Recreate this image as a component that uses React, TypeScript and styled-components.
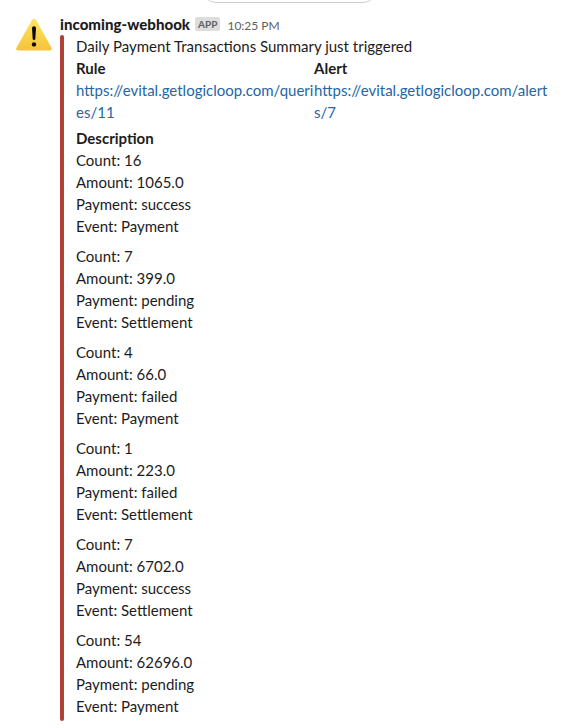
import React from "react";
import styled, { createGlobalStyle } from "styled-components";

const GlobalStyle = createGlobalStyle`
  * { box-sizing: border-box; }
  body {
    margin: 0;
    background: #fff;
    color: #1d1c1d;
    font-family: Lato, "Noto Sans", sans-serif;
    font-size: 15px;
    line-height: 22px;
    overflow: hidden;
  }
`;

const Page = styled.main`
  position: relative;
  height: 728px;
  padding: 14px 16px 0;
  overflow: hidden;
`;

const DatePill = styled.div`
  position: absolute;
  top: -25px;
  left: 202px;
  width: 175px;
  height: 28px;
  border: 1px solid #cfcfcf;
  border-radius: 24px;
`;

const Message = styled.article`
  display: grid;
  grid-template-columns: 36px 1fr;
  column-gap: 8px;
`;

const Avatar = styled.svg`
  display: block;
  width: 36px;
  height: 36px;
  margin-top: 3px;
`;

const Header = styled.header`
  display: flex;
  align-items: flex-start;
  height: 21px;
`;

const Sender = styled.span`
  font-weight: 900;
  line-height: 20px;
  letter-spacing: 0.04px;
`;

const AppBadge = styled.span`
  height: 14px;
  margin: 3px 7px 0 5px;
  padding: 0 3px;
  border-radius: 2px;
  background: #dddddd;
  color: #616061;
  font-size: 10px;
  font-weight: 700;
  line-height: 14px;
`;

const Time = styled.time`
  color: #616061;
  font-size: 12px;
  line-height: 24px;
`;

const Attachment = styled.section`
  display: flex;
  height: 686px;
`;

const Bar = styled.div`
  flex: none;
  width: 4px;
  margin-right: 12px;
  border-radius: 8px;
  background: #b04238;
`;

const Content = styled.div`
  flex: 1;
`;

const Fields = styled.div`
  display: grid;
  grid-template-columns: 238px 238px;
  margin-bottom: 4px;
`;

const Label = styled.div`
  font-weight: 700;
`;

const Link = styled.a`
  display: block;
  color: #2566a3;
  white-space: nowrap;
`;

const Group = styled.div`
  margin-bottom: 8px;
`;

const records = [
  ["16", "1065.0", "success", "Payment"],
  ["7", "399.0", "pending", "Settlement"],
  ["4", "66.0", "failed", "Payment"],
  ["1", "223.0", "failed", "Settlement"],
  ["7", "6702.0", "success", "Settlement"],
  ["54", "62696.0", "pending", "Payment"],
];

export default function App() {
  return (
    <Page>
      <GlobalStyle />
      <DatePill />
      <Message>
        <Avatar viewBox="0 0 36 36" aria-label="Warning">
          <defs>
            <linearGradient id="sign" x1="0" y1="0" x2="0" y2="1">
              <stop offset="0" stopColor="#ffe16b" />
              <stop offset="0.5" stopColor="#fad549" />
              <stop offset="1" stopColor="#f5c33b" />
            </linearGradient>
          </defs>
          <path
            d="M16.1 2.8Q18 0.5 19.9 2.8L35.5 30.7Q36.5 33.5 34 33.6H2Q-.5 33.5.5 30.7Z"
            fill="url(#sign)"
          />
          <path d="M16 11.1Q16 9.2 18 9.2T20 11.1L19.3 22Q19.2 23.1 18 23.1T16.7 22Z" fill="#0c0b08" />
          <circle cx="18" cy="27.4" r="2.2" fill="#0c0b08" />
        </Avatar>
        <div>
          <Header>
            <Sender>incoming-webhook</Sender>
            <AppBadge>APP</AppBadge>
            <Time>10:25 PM</Time>
          </Header>
          <Attachment>
            <Bar />
            <Content>
              <div>Daily Payment Transactions Summary just triggered</div>
              <Fields>
                <div>
                  <Label>Rule</Label>
                  <Link>https://evital.getlogicloop.com/queri<br />es/11</Link>
                </div>
                <div>
                  <Label>Alert</Label>
                  <Link>https://evital.getlogicloop.com/alert<br />s/7</Link>
                </div>
              </Fields>
              <Label>Description</Label>
              {records.map(([count, amount, payment, event], i) => (
                <Group key={i}>
                  <div>Count: {count}</div>
                  <div>Amount: {amount}</div>
                  <div>Payment: {payment}</div>
                  <div>Event: {event}</div>
                </Group>
              ))}
            </Content>
          </Attachment>
        </div>
      </Message>
    </Page>
  );
}
